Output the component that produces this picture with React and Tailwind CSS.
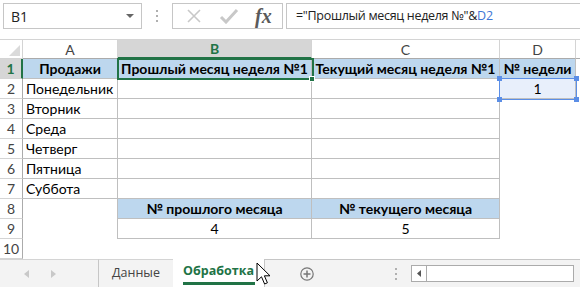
import React from "react";

const CELL_FONT = "font-['Lato','Noto_Sans',sans-serif]";
const UI_FONT = "font-['Open_Sans','Noto_Sans',sans-serif]";

// each row: A, B, C, D cells as {t, cls}
const B = "border-r border-b border-[#bfbfbf]";
const HDR = "bg-[#bdd7ee] font-bold";

const rows = [
  [
    { t: "Продажи", cls: `${B} ${HDR} justify-center` },
    { t: "Прошлый месяц неделя №1", cls: `${B} ${HDR} justify-center` },
    { t: "Текущий месяц неделя №1", cls: `${B} ${HDR} justify-center` },
    { t: "№ недели", cls: `${B} ${HDR} justify-center` },
  ],
  [
    { t: "Понедельник", cls: `${B} pl-[3px]` },
    { t: "", cls: B },
    { t: "", cls: B },
    { t: "1", cls: `${B} justify-center bg-[#e8effb]` },
  ],
  [{ t: "Вторник", cls: `${B} pl-[3px]` }, { t: "", cls: B }, { t: "", cls: B }, { t: "", cls: "" }],
  [{ t: "Среда", cls: `${B} pl-[3px]` }, { t: "", cls: B }, { t: "", cls: B }, { t: "", cls: "" }],
  [{ t: "Четверг", cls: `${B} pl-[3px]` }, { t: "", cls: B }, { t: "", cls: B }, { t: "", cls: "" }],
  [{ t: "Пятница", cls: `${B} pl-[3px]` }, { t: "", cls: B }, { t: "", cls: B }, { t: "", cls: "" }],
  [{ t: "Суббота", cls: `${B} pl-[3px]` }, { t: "", cls: B }, { t: "", cls: B }, { t: "", cls: "" }],
  [
    { t: "", cls: "border-r border-[#bfbfbf]" },
    { t: "№ прошлого месяца", cls: `${B} ${HDR} justify-center` },
    { t: "№ текущего месяца", cls: `${B} ${HDR} justify-center` },
    { t: "", cls: "" },
  ],
  [
    { t: "", cls: "border-r border-[#bfbfbf]" },
    { t: "4", cls: `${B} justify-center` },
    { t: "5", cls: `${B} justify-center` },
    { t: "", cls: "" },
  ],
  [{ t: "", cls: "" }, { t: "", cls: "" }, { t: "", cls: "" }, { t: "", cls: "" }],
];

function Cursor() {
  return (
    <svg width="16" height="25" viewBox="0 0 16 25" className="absolute left-[256px] top-[262px]">
      <path
        d="M1 1 L1 19 L5.5 14.8 L8.6 22 L11.4 20.8 L8.4 13.8 L14 13.8 Z"
        fill="#fff"
        stroke="#000"
        strokeWidth="1"
      />
    </svg>
  );
}

export default function App() {
  return (
    <div className={`relative w-[580px] h-[287px] bg-white overflow-hidden ${CELL_FONT} text-[14px] text-black`}>
      {/* formula bar */}
      <div className="h-[39px] flex items-start pt-[3px] pl-[3px]">
        <div className={`w-[139px] h-[26px] border border-[#c6c6c6] flex items-center justify-between pl-[7px] pr-[7px] ${UI_FONT} text-[14px] text-[#222]`}>
          <span>B1</span>
          <svg width="8" height="5" viewBox="0 0 8 5">
            <path d="M0 0 L8 0 L4 4 Z" fill="#666" />
          </svg>
        </div>
        <div className="w-[30px] h-[26px] flex flex-col items-center justify-center gap-[3px]">
          <span className="w-[2px] h-[2px] bg-[#b0b0b0]" />
          <span className="w-[2px] h-[2px] bg-[#b0b0b0]" />
          <span className="w-[2px] h-[2px] bg-[#b0b0b0]" />
        </div>
        <div className="w-[111px] h-[26px] border border-[#c6c6c6] flex items-center">
          <svg width="16" height="16" viewBox="0 0 16 16" className="ml-[13px]">
            <path d="M2 2 L14 14 M14 2 L2 14" stroke="#c8c8c8" strokeWidth="1.6" />
          </svg>
          <svg width="20" height="16" viewBox="0 0 20 16" className="ml-[17px]">
            <path d="M2 9 L7 14 L18 2" stroke="#c8c8c8" strokeWidth="3" fill="none" />
          </svg>
          <span className="ml-[16px] font-['Liberation_Serif',serif] italic font-bold text-[20px] leading-none text-[#5a5a5a]">
            fx
          </span>
        </div>
        <div className={`flex-1 h-[26px] ml-[3px] border-t border-b border-l border-[#c6c6c6] flex items-center pl-[9px] ${UI_FONT} text-[12.5px] tracking-[-0.3px] text-[#222]`}>
          <span>="Прошлый месяц неделя №"&amp;</span>
          <span className="text-[#3f76d6]">D2</span>
        </div>
      </div>

      {/* grid */}
      <div className="grid grid-cols-[23px_95px_194px_188px_76px_1fr]">
        {/* column headers */}
        <div className="h-[20px] border-t border-[#d4d4d4] border-r border-b bg-white relative">
          <svg width="11" height="11" viewBox="0 0 11 11" className="absolute right-[2px] bottom-[2px]">
            <path d="M11 0 L11 11 L0 11 Z" fill="#dadada" />
          </svg>
        </div>
        <div className="h-[20px] border-t border-r border-b border-[#d4d4d4] border-b-[#ababab] flex items-center justify-center text-[#444]">A</div>
        <div className="h-[20px] border-t border-[#d4d4d4] border-r bg-[#d6d6d6] border-b-2 border-b-[#217346] flex items-center justify-center text-[#217346] font-bold">B</div>
        <div className="h-[20px] border-t border-r border-b border-[#d4d4d4] border-b-[#ababab] flex items-center justify-center text-[#444]">C</div>
        <div className="h-[20px] border-t border-r border-b border-[#d4d4d4] border-b-[#ababab] flex items-center justify-center text-[#444]">D</div>
        <div className="h-[20px] border-t border-b border-[#d4d4d4] border-b-[#ababab]" />

        {rows.map((r, i) => (
          <React.Fragment key={i}>
            <div
              className={
                i === 0
                  ? "h-[20px] bg-[#d6d6d6] border-r-2 border-r-[#217346] border-b border-b-[#d4d4d4] flex items-center justify-center text-[#217346] font-bold"
                  : "h-[20px] border-r border-r-[#ababab] border-b border-b-[#d4d4d4] flex items-center justify-center text-[#444]"
              }
            >
              {i + 1}
            </div>
            {r.map((c, j) => (
              <div key={j} className={`h-[20px] flex items-center whitespace-nowrap ${c.cls}`}>
                {c.t}
              </div>
            ))}
            <div className="h-[20px]" />
          </React.Fragment>
        ))}
      </div>

      {/* active cell B1 */}
      <div className="absolute left-[117px] top-[58px] w-[197px] h-[22px] border-2 border-[#217346] pointer-events-none" />
      <div className="absolute left-[309px] top-[76px] w-[6px] h-[6px] bg-[#217346] border border-white" />

      {/* reference highlight D2 */}
      <div className="absolute left-[499px] top-[78px] w-[78px] h-[22px] border-[1.5px] border-[#5b8ee6] pointer-events-none" />
      <span className="absolute left-[497px] top-[76px] w-[5px] h-[5px] bg-[#5b8ee6]" />
      <span className="absolute left-[574px] top-[76px] w-[5px] h-[5px] bg-[#5b8ee6]" />
      <span className="absolute left-[497px] top-[97px] w-[5px] h-[5px] bg-[#5b8ee6]" />
      <span className="absolute left-[574px] top-[97px] w-[5px] h-[5px] bg-[#5b8ee6]" />

      {/* sheet tabs */}
      <div className={`h-[28px] flex bg-[#f3f3f3] ${UI_FONT}`}>
        <div className="w-[99px] border-t border-[#d4d4d4] border-r border-r-[#c6c6c6] flex items-center pl-[24px] gap-[22px]">
          <svg width="5" height="8" viewBox="0 0 5 8"><path d="M5 0 L5 8 L0 4 Z" fill="#c8c8c8" /></svg>
          <svg width="5" height="8" viewBox="0 0 5 8"><path d="M0 0 L0 8 L5 4 Z" fill="#c8c8c8" /></svg>
        </div>
        <div className="w-[74px] border-t border-[#d4d4d4] flex items-center justify-center text-[#444] text-[12.5px]">Данные</div>
        <div className="w-[92px] bg-white flex flex-col items-center justify-center border-r border-[#c6c6c6]">
          <span className="font-bold text-[#217346] text-[12.5px] leading-none mt-[1px]">Обработка</span>
          <span className="w-[72px] h-[3px] bg-[#217346] mt-[5px] -mb-[3px]" />
        </div>
        <div className="w-[146px] border-t border-[#c6c6c6] flex items-center">
          <svg width="14" height="14" viewBox="0 0 14 14" className="ml-[35px]">
            <circle cx="7" cy="7" r="6.2" fill="none" stroke="#777" strokeWidth="1.2" />
            <path d="M7 3.5 L7 10.5 M3.5 7 L10.5 7" stroke="#777" strokeWidth="1.5" />
          </svg>
          <div className="ml-auto mr-[14px] flex flex-col gap-[3px]">
            <span className="w-[2px] h-[2px] bg-[#b0b0b0]" />
            <span className="w-[2px] h-[2px] bg-[#b0b0b0]" />
            <span className="w-[2px] h-[2px] bg-[#b0b0b0]" />
          </div>
        </div>
        <div className="flex-1 border-t border-[#c6c6c6] flex items-center">
          <div className="w-[163px] h-[17px] border border-[#ababab] bg-white flex">
            <div className="w-[15px] border-r border-[#ababab] flex items-center justify-center">
              <svg width="4" height="7" viewBox="0 0 4 7"><path d="M4 0 L4 7 L0 3.5 Z" fill="#555" /></svg>
            </div>
          </div>
        </div>
      </div>

      <Cursor />
    </div>
  );
}
